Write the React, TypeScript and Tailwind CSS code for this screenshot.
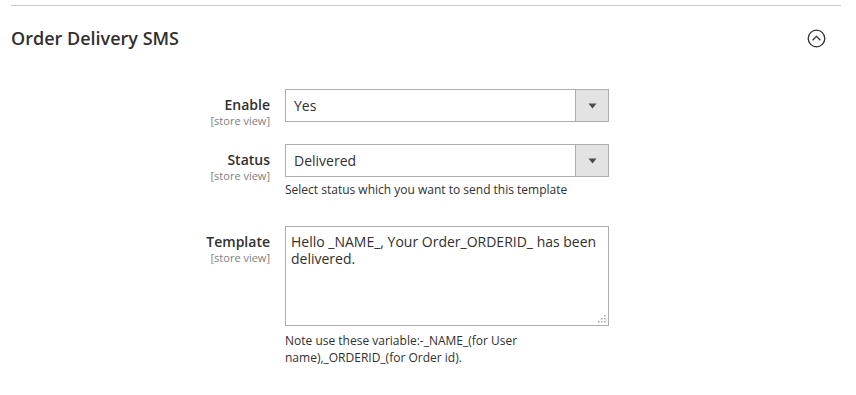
const font = { fontFamily: '"Open Sans", "Noto Sans", sans-serif' };

const Arrow = () => (
  <div className="w-[33px] self-stretch bg-[#e3e3e3] border-l border-[#adadad] flex items-center justify-center">
    <svg width="9" height="6" viewBox="0 0 9 6">
      <path d="M0.5 0.5h8L4.5 5.5z" fill="#514943" />
    </svg>
  </div>
);

const Select = ({ value }: { value: string }) => (
  <div className="w-[324px] h-[33px] border border-[#adadad] bg-white flex items-stretch">
    <div className="flex-1 flex items-center pl-[8px] text-[14px] text-[#303030]">{value}</div>
    <Arrow />
  </div>
);

const Label = ({ text }: { text: string }) => (
  <div className="w-[259px] flex flex-col items-end pt-[6px]">
    <span className="text-[14px] font-semibold text-[#303030] leading-[19px]">{text}</span>
    <span className="text-[11px] text-[#808080] leading-[13px]">[store view]</span>
  </div>
);

export default function App() {
  return (
    <div className="w-[856px] h-[395px] bg-white px-[11px] pt-[5px]" style={font}>
      <div className="w-[830px] border-t border-[#cccccc]" />
      <div className="flex items-center justify-between h-[64px] pr-[19px]">
        <h2 className="text-[18px] font-semibold text-[#303030]">Order Delivery SMS</h2>
        <svg width="19" height="19" viewBox="0 0 19 19">
          <circle cx="9.5" cy="9.5" r="8.3" fill="none" stroke="#303030" strokeWidth="1.3" />
          <path d="M5.6 11.2L9.5 7.4l3.9 3.8" fill="none" stroke="#303030" strokeWidth="1.3" />
        </svg>
      </div>
      <div className="flex flex-col pt-[19px]">
        <div className="flex gap-[15px]">
          <Label text="Enable" />
          <Select value="Yes" />
        </div>
        <div className="flex gap-[15px] mt-[17px]">
          <Label text="Status" />
          <div className="flex flex-col">
            <Select value="Delivered" />
            <p className="text-[12px] text-[#303030] mt-[4px] leading-[17px]">
              Select status which you want to send this template
            </p>
          </div>
        </div>
        <div className="flex gap-[15px] mt-[28px]">
          <Label text="Template" />
          <div className="flex flex-col w-[324px]">
            <div className="relative h-[100px] border border-[#adadad] bg-white px-[5px] pt-[6px] text-[14px] leading-[17px] text-[#303030]">
              Hello _NAME_, Your Order_ORDERID_ has been delivered.
              <svg className="absolute right-[2px] bottom-[2px]" width="8" height="8" viewBox="0 0 8 8">
                <rect x="6" y="0" width="1.5" height="1.5" fill="#aaa" />
                <rect x="3" y="3" width="1.5" height="1.5" fill="#aaa" />
                <rect x="6" y="3" width="1.5" height="1.5" fill="#aaa" />
                <rect x="0" y="6" width="1.5" height="1.5" fill="#aaa" />
                <rect x="3" y="6" width="1.5" height="1.5" fill="#aaa" />
                <rect x="6" y="6" width="1.5" height="1.5" fill="#aaa" />
              </svg>
            </div>
            <p className="text-[12px] text-[#303030] mt-[6px] leading-[17px] w-[250px]">
              Note use these variable:-_NAME_(for User name),_ORDERID_(for Order id).
            </p>
          </div>
        </div>
      </div>
    </div>
  );
}
